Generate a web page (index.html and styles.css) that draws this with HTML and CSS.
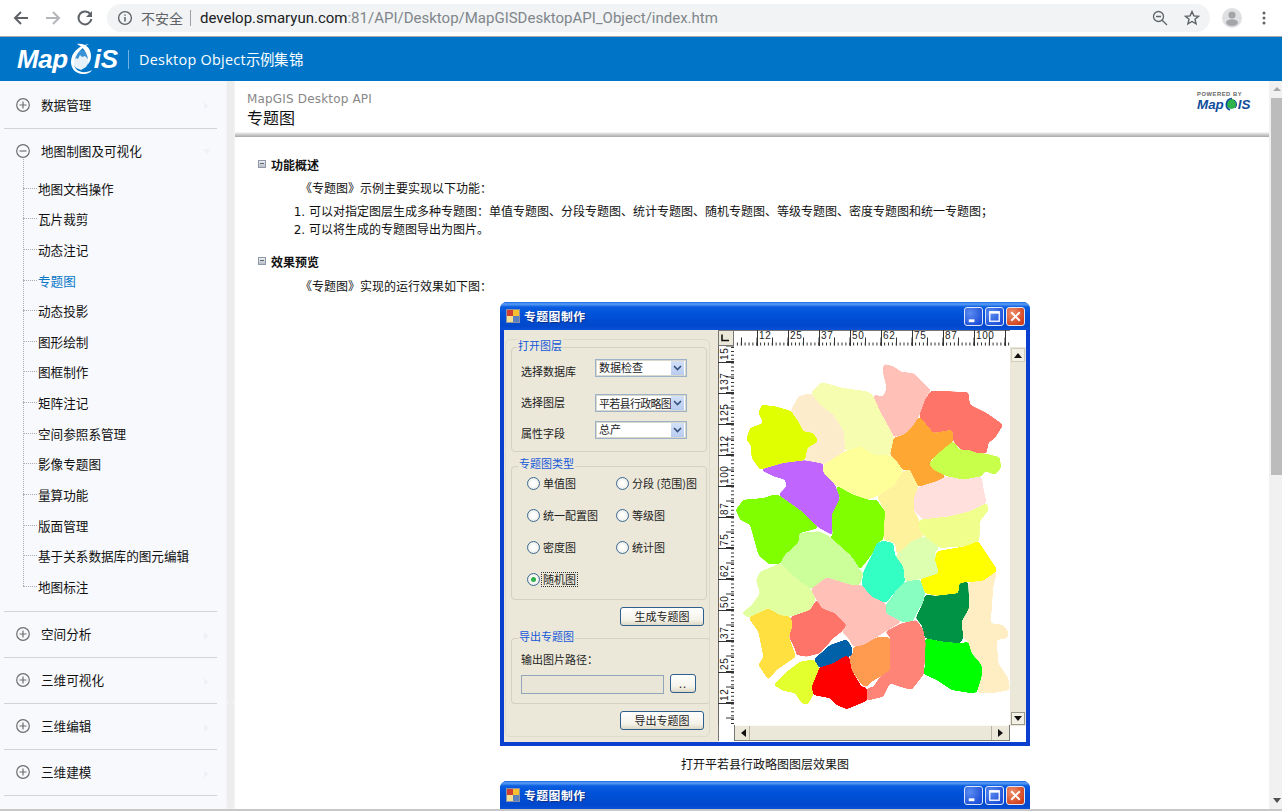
FILE: index.html
```html
<!DOCTYPE html>
<html lang="zh-CN">
<head>
<meta charset="utf-8">
<title>专题图</title>
<link rel="stylesheet" href="styles.css">
</head>
<body>
<div class="app">
  <div class="browser">
    <div class="nav-btns">
      <svg class="nav-ic" viewBox="0 0 18 18"><path d="M16 9H3.5M9 3 3 9l6 6" fill="none" stroke="#5f6368" stroke-width="2"/></svg>
      <svg class="nav-ic" viewBox="0 0 18 18"><path d="M2 9h12.5M9 3l6 6-6 6" fill="none" stroke="#b4b6b9" stroke-width="2"/></svg>
      <svg class="nav-ic" viewBox="0 0 18 18"><path d="M14.6 5.6A6.5 6.5 0 1 0 15.4 10" fill="none" stroke="#5f6368" stroke-width="2"/><path d="M16 2v6h-6z" fill="#5f6368"/></svg>
    </div>
    <div class="omnibox">
      <svg class="info" viewBox="0 0 16 16"><circle cx="8" cy="8" r="6.4" fill="none" stroke="#5f6368" stroke-width="1.4"/><path d="M8 7v4.5M8 4.4v1.4" stroke="#5f6368" stroke-width="1.5"/></svg>
      <span class="insecure">不安全</span>
      <span class="url-sep"></span>
      <span class="url"><span class="url-host">develop.smaryun.com</span>:81/API/Desktop/MapGISDesktopAPI_Object/index.htm</span>
      <svg class="omni-ic zoom-ic" viewBox="0 0 16 16"><circle cx="6.5" cy="6.5" r="5" fill="none" stroke="#5f6368" stroke-width="1.3"/><path d="M4 6.5h5M10.2 10.2 15 15" stroke="#5f6368" stroke-width="1.3"/></svg>
      <svg class="omni-ic" viewBox="0 0 16 16"><path d="m8 1.6 1.9 4.3 4.6.4-3.5 3 1.1 4.6L8 11.5l-4.1 2.4L5 9.3l-3.5-3 4.6-.4z" fill="none" stroke="#5f6368" stroke-width="1.4"/></svg>
    </div>
    <svg class="avatar" viewBox="0 0 20 20"><circle cx="10" cy="10" r="10" fill="#dfe0e2"/><circle cx="10" cy="7" r="3.6" fill="#a4a6a9"/><ellipse cx="10" cy="14.6" rx="6" ry="3.4" fill="#a4a6a9"/></svg>
    <svg class="dots" viewBox="0 0 4 14"><circle cx="2" cy="2" r="1.5" fill="#5f6368"/><circle cx="2" cy="7" r="1.5" fill="#5f6368"/><circle cx="2" cy="12" r="1.5" fill="#5f6368"/></svg>
  </div>

  <header class="topbar">
    <div class="logo">
      <span>Map</span>
      <svg class="logo-globe" viewBox="0 0 24 34"><circle cx="12" cy="17" r="9" fill="#3a92d6"/><path d="M4 19l3-3 2 1 2-4 2 2 3-1 3 3 1 3-3 5-5 3-5-2-3-4z" fill="#e6f1fa"/><path d="M20 2C11 3 2 10 2 20c0 7 5 12 12 12 5 0 8-2 9-4-5 3-12 3-16-1C3 22 5 10 20 2z" fill="#fff"/><path d="M8 2c8-1 14 4 14 12 0 3-1 6-3 8 1-8-3-16-11-20z" fill="#fff"/></svg>
      <span>iS</span>
    </div>
    <span class="top-sep"></span>
    <span class="top-title">Desktop Object示例集锦</span>
  </header>

  <div class="main">
    <nav class="sidebar">
      <div class="nav-group first"><svg class="toggle" viewBox="0 0 14 14"><circle cx="7" cy="7" r="6.3"/><path d="M3.500 7h7M7 3.500v7"/></svg><span class="nav-title">数据管理</span><i class="tri"></i></div>
      <div class="nav-group open"><svg class="toggle" viewBox="0 0 14 14"><circle cx="7" cy="7" r="6.3"/><path d="M3.500 7h7"/></svg><span class="nav-title">地图制图及可视化</span><i class="tri down"></i></div>
      <ul class="tree">
        <li>地图文档操作</li>
        <li>瓦片裁剪</li>
        <li>动态注记</li>
        <li class="active">专题图</li>
        <li>动态投影</li>
        <li>图形绘制</li>
        <li>图框制作</li>
        <li>矩阵注记</li>
        <li>空间参照系管理</li>
        <li>影像专题图</li>
        <li>量算功能</li>
        <li>版面管理</li>
        <li>基于关系数据库的图元编辑</li>
        <li>地图标注</li>
      </ul>
      <div class="nav-group"><svg class="toggle" viewBox="0 0 14 14"><circle cx="7" cy="7" r="6.3"/><path d="M3.500 7h7M7 3.500v7"/></svg><span class="nav-title">空间分析</span><i class="tri"></i></div>
      <div class="nav-group"><svg class="toggle" viewBox="0 0 14 14"><circle cx="7" cy="7" r="6.3"/><path d="M3.500 7h7M7 3.500v7"/></svg><span class="nav-title">三维可视化</span><i class="tri"></i></div>
      <div class="nav-group"><svg class="toggle" viewBox="0 0 14 14"><circle cx="7" cy="7" r="6.3"/><path d="M3.500 7h7M7 3.500v7"/></svg><span class="nav-title">三维编辑</span><i class="tri"></i></div>
      <div class="nav-group"><svg class="toggle" viewBox="0 0 14 14"><circle cx="7" cy="7" r="6.3"/><path d="M3.500 7h7M7 3.500v7"/></svg><span class="nav-title">三维建模</span><i class="tri"></i></div>
    </nav>
    <div class="side-scroll"><div class="side-thumb one"></div><div class="side-thumb two"></div></div>

    <main class="content">
      <div class="page-head">
        <div class="head-text">
          <div class="api-name">MapGIS Desktop API</div>
          <h1 class="page-title">专题图</h1>
        </div>
        <div class="powered">
          <div class="powered-by">POWERED BY</div>
          <div class="powered-logo"><span>Map</span><svg class="powered-globe" viewBox="0 0 12 14"><circle cx="6.500" cy="7" r="5" fill="#2db34a"/><path d="M7 1.500A6 6 0 0 0 5 13" fill="none" stroke="#0f4d9c" stroke-width="1.600"/><path d="M9 3a5 5 0 0 1 1 8" fill="none" stroke="#0f4d9c" stroke-width="1"/></svg><span>IS</span></div>
        </div>
      </div>
      <div class="body-wrap">
        <div class="sec-head"><span class="sec-box"></span>功能概述</div>
        <p class="para">《专题图》示例主要实现以下功能：</p>
        <ol class="list">
          <li>可以对指定图层生成多种专题图：单值专题图、分段专题图、统计专题图、随机专题图、等级专题图、密度专题图和统一专题图；</li>
          <li>可以将生成的专题图导出为图片。</li>
        </ol>
        <div class="sec-head second"><span class="sec-box"></span>效果预览</div>
        <p class="para">《专题图》实现的运行效果如下图：</p>

        <figure class="figure">
          <div class="xp-window">
            <div class="xp-title">
              <svg class="xp-icon" viewBox="0 0 14 14"><rect width="14" height="14" fill="#8a93a8"/><rect x="1" y="1" width="6" height="6" fill="#d04030"/><rect x="7" y="1" width="6" height="6" fill="#f6c030"/><rect x="1" y="7" width="6" height="6" fill="#f4e090"/><rect x="7" y="7" width="6" height="6" fill="#5a80c0"/></svg>
              <span class="xp-caption">专题图制作</span>
              <span class="xp-btn"><svg viewBox="0 0 18 18"><rect x="4" y="12" width="6" height="3" fill="#fff"/></svg></span>
              <span class="xp-btn"><svg viewBox="0 0 18 18"><rect x="4" y="4" width="10" height="10" fill="none" stroke="#fff" stroke-width="1.400"/><path d="M4 5h10" stroke="#fff" stroke-width="2"/></svg></span>
              <span class="xp-btn close"><svg viewBox="0 0 18 18"><path d="m4.500 4.500 9 9m0-9-9 9" stroke="#fff" stroke-width="2"/></svg></span>
            </div>
            <div class="xp-client">
              <div class="panel">
                <div class="frame">
                  <div class="group g-open">
                    <span class="legend">打开图层</span>
                    <div class="form-row"><span class="label low">选择数据库</span><div class="combo"><span class="combo-text">数据检查</span><span class="combo-btn"><svg viewBox="0 0 9 6"><path d="m1 1 3.500 3.500L8 1" fill="none" stroke="#34507e" stroke-width="1.600"/></svg></span></div></div>
                    <div class="form-row r2"><span class="label up">选择图层</span><div class="combo"><span class="combo-text tight">平若县行政略图</span><span class="combo-btn"><svg viewBox="0 0 9 6"><path d="m1 1 3.500 3.500L8 1" fill="none" stroke="#34507e" stroke-width="1.600"/></svg></span></div></div>
                    <div class="form-row r3"><span class="label low">属性字段</span><div class="combo"><span class="combo-text">总产</span><span class="combo-btn"><svg viewBox="0 0 9 6"><path d="m1 1 3.500 3.500L8 1" fill="none" stroke="#34507e" stroke-width="1.600"/></svg></span></div></div>
                  </div>
                  <div class="group g-type">
                    <span class="legend">专题图类型</span>
                    <div class="radios">
                      <div class="radio"><i class="dot"></i>单值图</div>
                      <div class="radio"><i class="dot"></i>分段 (范围)图</div>
                      <div class="radio"><i class="dot"></i>统一配置图</div>
                      <div class="radio"><i class="dot"></i>等级图</div>
                      <div class="radio"><i class="dot"></i>密度图</div>
                      <div class="radio"><i class="dot"></i>统计图</div>
                      <div class="radio"><i class="dot on"></i><span class="focus">随机图</span></div>
                    </div>
                  </div>
                  <div class="xp-button b-make">生成专题图</div>
                  <div class="group g-export">
                    <span class="legend">导出专题图</span>
                    <div class="label path-label">输出图片路径：</div>
                    <div class="path-row"><div class="path-input"></div><div class="xp-button b-dots">..</div></div>
                  </div>
                  <div class="xp-button b-export">导出专题图</div>
                </div>
              </div>
              <div class="mapview">
                <svg class="map-svg" viewBox="718 330 308 412">
                  <defs>
                    <filter id="smooth" x="-15%" y="-15%" width="130%" height="130%" color-interpolation-filters="sRGB">
                      <feMorphology operator="dilate" radius="1.500"/>
                      <feGaussianBlur stdDeviation="5"/>
                      <feComponentTransfer><feFuncA type="linear" slope="14" intercept="-6.500"/></feComponentTransfer>
                    </filter>
                  </defs>
                  <rect x="718" y="330" width="308" height="412" fill="#fff"/>
                  <rect x="718" y="330" width="292" height="1" fill="#777"/>
                  <!-- horizontal ruler -->
                  <g stroke="#333">
                    <line x1="733" y1="344" x2="1010" y2="344" stroke-width="3" stroke-dasharray="1 2.875"/>
                    <line x1="741" y1="341.500" x2="1010" y2="341.500" stroke-width="8" stroke-dasharray="1 14.500"/>
                    <line x1="757" y1="338" x2="1010" y2="338" stroke-width="16" stroke-dasharray="1 30"/>
                  </g>
                  <g class="ruler-text">
                    <text x="759" y="339">12</text><text x="790" y="339">25</text><text x="821" y="339">37</text><text x="852" y="339">50</text><text x="883" y="339">62</text><text x="914" y="339">75</text><text x="945" y="339">87</text><text x="976" y="339">100</text>
                  </g>
                  <!-- vertical ruler -->
                  <rect x="718" y="346" width="16" height="380" fill="#fff"/>
                  <rect x="718" y="346" width="1" height="380" fill="#666"/>
                  <g stroke="#333">
                    <line x1="732.500" y1="346" x2="732.500" y2="726" stroke-width="3" stroke-dasharray="1 2.875" stroke-dashoffset="-1"/>
                    <line x1="730" y1="346" x2="730" y2="726" stroke-width="8" stroke-dasharray="1 14.500" stroke-dashoffset="0.500"/>
                    <line x1="726" y1="362" x2="726" y2="726" stroke-width="16" stroke-dasharray="1 30"/>
                  </g>
                  <g class="ruler-text">
                    <text transform="translate(728 360) rotate(-90)">15</text>
                    <text transform="translate(728 391) rotate(-90)">137</text>
                    <text transform="translate(728 422) rotate(-90)">125</text>
                    <text transform="translate(728 453) rotate(-90)">112</text>
                    <text transform="translate(728 484) rotate(-90)">100</text>
                    <text transform="translate(728 515) rotate(-90)">87</text>
                    <text transform="translate(728 546) rotate(-90)">75</text>
                    <text transform="translate(728 577) rotate(-90)">62</text>
                    <text transform="translate(728 608) rotate(-90)">50</text>
                    <text transform="translate(728 639) rotate(-90)">37</text>
                    <text transform="translate(728 670) rotate(-90)">25</text>
                    <text transform="translate(728 701) rotate(-90)">12</text>
                  </g>
                  <!-- corner -->
                  <rect x="718" y="330" width="16" height="16" fill="#ebe8d9"/>
                  <rect x="718.500" y="330.500" width="15" height="15" fill="none" stroke="#777"/>
                  <path d="M722 334.500v6h7" fill="none" stroke="#111" stroke-width="1.600"/>

                  <!-- map, drawn in 3x coordinates -->
                  <g transform="translate(720 298) scale(.33333)">
                    <polygon filter="url(#smooth)" fill="#ffc0b8" points="490,197 520,205 545,222 580,225 605,250 632,275 615,305 597,355 578,385 555,408 522,418 505,385 480,340 458,290 490,295 500,270 490,230"/>
                    <polygon filter="url(#smooth)" fill="#ff7468" points="632,278 745,282 750,320 800,345 850,380 825,420 805,435 800,467 770,465 745,455 722,455 700,430 697,395 640,405 615,375 597,355 615,305"/>
                    <polygon filter="url(#smooth)" fill="#ffa733" points="597,355 615,375 640,405 697,395 700,430 670,455 630,490 640,515 680,535 650,550 595,567 570,515 550,518 530,490 510,470 520,420 555,408 578,385"/>
                    <polygon filter="url(#smooth)" fill="#c8ff4a" points="700,430 720,455 745,455 770,465 800,467 840,478 843,510 825,530 795,520 785,535 730,545 680,535 640,515 627,497 650,470 680,445"/>
                    <polygon filter="url(#smooth)" fill="#f6fdb0" points="305,252 370,270 440,280 458,290 480,340 505,385 522,418 510,470 480,480 460,470 420,445 375,460 372,400 340,350 300,320 272,285"/>
                    <polygon filter="url(#smooth)" fill="#fdeccc" points="272,285 300,320 340,350 372,400 375,460 310,500 255,487 255,475 262,450 295,430 280,405 250,400 235,370 212,338 235,295"/>
                    <polygon filter="url(#smooth)" fill="#e0ff00" points="125,320 165,325 212,338 235,370 250,400 280,405 295,430 262,450 255,487 190,495 120,515 95,480 92,440 78,425 90,390 130,375 115,345"/>
                    <polygon filter="url(#smooth)" fill="#c066ff" points="120,515 190,495 255,487 310,497 310,525 345,560 360,600 335,650 338,712 297,690 245,640 175,590 200,565 195,545 160,535"/>
                    <polygon filter="url(#smooth)" fill="#ffff99" points="310,500 375,460 420,445 460,470 510,470 530,490 550,518 520,565 470,595 445,605 400,590 345,560 310,525"/>
                    <polygon filter="url(#smooth)" fill="#fff29c" points="550,518 570,515 595,567 582,600 582,640 598,665 595,690 612,715 575,730 530,770 525,735 490,725 490,660 495,640 470,595 520,565"/>
                    <polygon filter="url(#smooth)" fill="#ffe0dc" points="595,567 650,550 680,535 730,545 785,535 790,570 800,615 750,640 690,655 610,665 582,640 582,600"/>
                    <polygon filter="url(#smooth)" fill="#f0ff8c" points="800,615 807,635 780,670 778,730 735,745 660,750 612,715 595,690 598,665 690,655 750,640"/>
                    <polygon filter="url(#smooth)" fill="#80ff00" points="130,600 160,590 175,590 245,640 297,690 240,705 235,735 195,770 180,798 145,798 115,770 90,680 60,665 47,635 70,605"/>
                    <polygon filter="url(#smooth)" fill="#80ff00" points="345,560 400,590 445,605 470,605 495,640 490,725 470,735 458,766 440,790 420,815 405,790 390,770 328,720 338,712 335,650 360,600"/>
                    <polygon filter="url(#smooth)" fill="#ccff99" points="238,705 297,700 328,715 390,770 405,790 420,815 430,826 420,861 395,861 345,846 320,838 275,874 240,851 180,796 195,770 235,735"/>
                    <polygon filter="url(#smooth)" fill="#33ffc4" points="470,735 490,728 520,735 525,771 550,806 555,851 530,876 497,916 455,896 425,861 430,821 458,766"/>
                    <polygon filter="url(#smooth)" fill="#ddffb0" points="530,770 575,730 612,715 660,750 645,761 657,826 600,844 555,851 550,806 525,771"/>
                    <polygon filter="url(#smooth)" fill="#ffff00" points="650,760 735,745 775,730 805,775 825,805 832,818 790,848 745,853 718,856 715,886 650,893 615,886 600,844 657,826 645,786"/>
                    <polygon filter="url(#smooth)" fill="#88ffc0" points="555,851 600,844 615,886 610,911 590,946 575,976 545,971 497,946 497,921 530,876"/>
                    <polygon filter="url(#smooth)" fill="#e2ffa0" points="108,846 120,821 180,796 240,851 275,874 288,904 270,936 210,956 180,951 145,931 85,959 65,946 95,921 120,886"/>
                    <polygon filter="url(#smooth)" fill="#ffc0b8" points="320,838 345,846 395,861 425,861 455,896 497,916 497,946 545,971 495,1001 470,1018 430,1041 400,1046 385,1021 365,1001 380,981 345,946 305,931 288,904 272,874"/>
                    <polygon filter="url(#smooth)" fill="#009245" points="718,856 745,851 747,931 725,971 730,1021 720,1036 670,1031 615,1021 605,981 587,961 610,911 615,891 650,893 715,886"/>
                    <polygon filter="url(#smooth)" fill="#ffeec4" points="790,848 832,818 820,866 812,976 850,981 865,1001 862,1021 830,1026 835,1096 865,1141 870,1176 825,1184 770,1184 785,1136 785,1101 755,1066 745,1031 730,1021 725,971 747,931 745,853"/>
                    <polygon filter="url(#smooth)" fill="#00ff00" points="615,1021 670,1031 720,1036 745,1031 755,1066 785,1101 785,1136 770,1184 745,1184 695,1176 650,1146 610,1128 615,1101"/>
                    <polygon filter="url(#smooth)" fill="#ff8478" points="510,1018 495,1001 545,976 590,966 610,996 617,1036 612,1128 575,1176 540,1166 510,1156 490,1196 440,1208 440,1171 460,1166 480,1136 505,1116 510,1056"/>
                    <polygon filter="url(#smooth)" fill="#ff9b50" points="400,1046 430,1041 470,1018 510,1018 510,1116 480,1136 455,1151 440,1168 425,1161 395,1116 388,1076 398,1068"/>
                    <polygon filter="url(#smooth)" fill="#0060a8" points="380,1024 395,1046 398,1068 388,1076 340,1096 298,1111 282,1084 330,1041"/>
                    <polygon filter="url(#smooth)" fill="#ff0000" points="375,1074 388,1076 395,1116 425,1166 440,1168 442,1208 380,1234 350,1221 330,1201 280,1191 275,1166 292,1111 340,1096"/>
                    <polygon filter="url(#smooth)" fill="#ff7468" points="290,904 305,931 345,946 380,981 365,1001 340,1021 300,1066 260,1076 230,1071 222,1046 207,1016 218,981 212,956 270,936"/>
                    <polygon filter="url(#smooth)" fill="#ffe040" points="85,959 145,931 180,951 212,956 218,981 207,1016 228,1076 170,1116 145,1146 115,1101 130,1076 115,1001"/>
                    <polygon filter="url(#smooth)" fill="#e4ff2e" points="240,1091 282,1084 298,1111 275,1166 280,1191 262,1221 245,1216 225,1186 190,1178 160,1161 200,1121"/>
                  </g>

                  <!-- vertical scrollbar -->
                  <rect x="1010" y="347" width="16" height="379" fill="#ebe8d9"/>
                  <rect x="1011.500" y="348.500" width="13" height="13" fill="#f3f1e6" stroke="#d0cdbc"/>
                  <path d="m1014 358 4-5 4 5z" fill="#111"/>
                  <rect x="1011.500" y="712.500" width="13" height="12" fill="#f3f1e6" stroke="#9c9a8c"/>
                  <path d="m1014 716 4 5 4-5z" fill="#111"/>
                  <!-- horizontal scrollbar -->
                  <rect x="734" y="725" width="276" height="16" fill="#ebe8d9"/>
                  <rect x="734" y="725" width="276" height="1" fill="#fbfaf3"/>
                  <rect x="734" y="740" width="276" height="1" fill="#85837a"/>
                  <rect x="718" y="725" width="1" height="16" fill="#777"/>
                  <rect x="734" y="725" width="1" height="16" fill="#777"/>
                  <rect x="749" y="726" width="1" height="14" fill="#b8b5a4"/>
                  <rect x="991" y="726" width="1" height="14" fill="#b8b5a4"/>
                  <rect x="1009" y="725" width="1" height="16" fill="#777"/>
                  <path d="m746 729-5 4 5 4z" fill="#111"/>
                  <path d="m998 729 5 4-5 4z" fill="#111"/>
                </svg>
              </div>
            </div>
          </div>
          <figcaption class="caption">打开平若县行政略图图层效果图</figcaption>
          <div class="xp-window clipped">
            <div class="xp-title">
              <svg class="xp-icon" viewBox="0 0 14 14"><rect width="14" height="14" fill="#8a93a8"/><rect x="1" y="1" width="6" height="6" fill="#d04030"/><rect x="7" y="1" width="6" height="6" fill="#f6c030"/><rect x="1" y="7" width="6" height="6" fill="#f4e090"/><rect x="7" y="7" width="6" height="6" fill="#5a80c0"/></svg>
              <span class="xp-caption">专题图制作</span>
              <span class="xp-btn"><svg viewBox="0 0 18 18"><rect x="4" y="12" width="6" height="3" fill="#fff"/></svg></span>
              <span class="xp-btn"><svg viewBox="0 0 18 18"><rect x="4" y="4" width="10" height="10" fill="none" stroke="#fff" stroke-width="1.400"/><path d="M4 5h10" stroke="#fff" stroke-width="2"/></svg></span>
              <span class="xp-btn close"><svg viewBox="0 0 18 18"><path d="m4.500 4.500 9 9m0-9-9 9" stroke="#fff" stroke-width="2"/></svg></span>
            </div>
          </div>
        </figure>
      </div>
    </main>
    <div class="page-scroll">
      <i class="arrow-up"></i>
      <div class="page-thumb"></div>
      <i class="arrow-down"></i>
    </div>
  </div>
  <div class="bottom-line"></div>
</div>
</body>
</html>
```
FILE: styles.css
```css
* { box-sizing: border-box; }
html, body { margin: 0; padding: 0; height: 100%; overflow: hidden; background: #fff; }
body { font-family: "Noto Sans CJK SC", "Noto Sans", sans-serif; color: #111; }
p, h1, ul, ol, figure { margin: 0; padding: 0; }

.app { display: flex; flex-direction: column; width: 1282px; height: 811px; overflow: hidden; }

/* browser chrome */
.browser { flex: none; height: 37px; display: flex; align-items: center; background: #fff; border-bottom: 1px solid #a9a9a9; padding-bottom: 1px; }
.nav-btns { display: flex; gap: 14px; margin-left: 12px; }
.nav-ic { width: 18px; height: 18px; }
.omnibox { width: 1103px; height: 28px; margin-left: 13px; border-radius: 14px; background: #f1f3f4; display: flex; align-items: center; padding-left: 10px; padding-right: 8px; }
.info { width: 16px; height: 16px; flex: none; }
.insecure { font-size: 14px; color: #5f6368; margin-left: 8px; width: 42px; }
.url-sep { width: 1px; height: 16px; background: #9aa0a6; margin: 0 9px 0 7px; }
.url { font-family: Roboto, "Liberation Sans", sans-serif; font-size: 15px; color: #80868b; flex: 1; white-space: nowrap; }
.url-host { color: #202124; }
.omni-ic { width: 16px; height: 16px; flex: none; margin-right: 2px; }
.zoom-ic { margin-right: 16px; }
.avatar { width: 20px; height: 20px; margin-left: 12px; }
.dots { width: 4px; height: 14px; margin-left: 20px; }

/* blue header */
.topbar { flex: none; height: 44px; background: #0075c8; display: flex; align-items: center; padding-left: 17px; color: #fff; }
.logo { display: flex; align-items: center; font-family: "Liberation Sans", Arial, sans-serif; font-weight: bold; font-style: italic; font-size: 26px; letter-spacing: -.4px; width: 103px; }
.logo-globe { width: 24px; height: 34px; margin: 0 1px; flex: none; }
.top-sep { width: 1px; height: 19px; background: #6fb1e0; margin-left: 8px; }
.top-title { font-family: "Open Sans", sans-serif; font-size: 14.4px; margin: -2px 0 0 10px; letter-spacing: .28px; }

/* main */
.main { flex: none; height: 728px; display: flex; }
.bottom-line { flex: none; height: 2px; background: #c8c8c8; }

.sidebar { flex: none; width: 226px; background: #f8f9fd; padding: 1px 9px 0 4px; overflow: hidden; }
.nav-group { height: 46px; display: flex; align-items: center; border-bottom: 1px solid #d2d3d8; font-size: 12.6px; position: relative; color: #111; }
.nav-group.first { height: 47px; }
.nav-group.open { border-bottom: 0; height: 44px; }
.toggle { width: 14px; height: 14px; margin-left: 12px; flex: none; fill: none; stroke: #6e6e6e; stroke-width: 1.200; }
.nav-title { margin-left: 11px; margin-top: -2px; }
.tri { position: absolute; right: 8px; top: 20px; border-left: 5px solid #f0f1f6; border-top: 4px solid transparent; border-bottom: 4px solid transparent; }
.tri.down { border-left: 4px solid transparent; border-right: 4px solid transparent; border-top: 5px solid #f0f1f6; border-bottom: 0; right: 6px; }

.tree { list-style: none; margin: -14px -9px 0 19px; padding: 14px 0 10px; background-image: repeating-linear-gradient(to bottom, #a9abb5 0 1px, transparent 1px 2px); background-size: 1px calc(100% - 25px); background-repeat: no-repeat; position: relative; }
.tree::after { content: ""; position: absolute; left: -19px; right: 9px; bottom: 0; height: 1px; background: #d2d3d8; }
.tree li { height: 30.620px; display: flex; align-items: center; font-size: 12.6px; color: #111; white-space: nowrap; }
.tree li::before { content: ""; width: 14px; margin-right: 1px; border-top: 1px dotted #a9abb5; flex: none; }
.tree li.active { color: #0a78c8; }

.side-scroll { flex: none; width: 9px; background: #f3f3f3; padding: 0 1px; }
.side-thumb { background: #ededed; border-radius: 0 0 5px 5px; }
.side-thumb.one { height: 621px; }
.side-thumb.two { height: 106px; border-radius: 5px; }

.content { flex: 1; min-width: 0; overflow: hidden; background: #fff; }
.page-head { height: 56px; display: flex; justify-content: space-between; padding: 10px 17px 0 12px; background: linear-gradient(to bottom, #fff 0, #fff 51px, #e6e6e6 52px, #a8a8a8 56px); }
.api-name { font-family: "DejaVu Sans", sans-serif; font-size: 12px; letter-spacing: .17px; line-height: 17px; color: #888; }
.page-title { font-size: 16px; font-weight: normal; line-height: 22px; margin-top: -2px; color: #111; }
.powered { width: 55px; }
.powered-by { font-family: "Liberation Sans", sans-serif; font-size: 5.800px; font-weight: bold; letter-spacing: .55px; line-height: 7px; color: #666; white-space: nowrap; }
.powered-logo { display: flex; align-items: center; font-family: "Liberation Sans", sans-serif; font-weight: bold; font-style: italic; font-size: 13.400px; line-height: 13px; color: #0f4d9c; margin-top: -1px; }
.powered-globe { width: 12px; height: 14px; margin: 0 1px; }

.body-wrap { padding: 17px 0 0; font-size: 12px; color: #111; }
.sec-head { display: flex; align-items: center; height: 20px; margin-bottom: 1px; font-weight: bold; padding-left: 23px; }
.sec-head.second { margin-top: 13px; margin-bottom: 2px; }
.sec-box { width: 8px; height: 8px; margin-right: 5px; background: linear-gradient(#eceef2, #b8bec8); border: 1px solid #8f99a8; position: relative; }
.sec-box::after { content: ""; position: absolute; left: 1px; right: 1px; top: 2px; height: 1px; background: #5f6670; }
.para { height: 26px; line-height: 26px; padding-left: 65px; white-space: nowrap; }
.list { padding-left: 74px; margin-top: 1px; }
.list li { height: 18px; line-height: 18px; white-space: nowrap; }
.list li::marker { font-family: "DejaVu Sans", sans-serif; }

.figure { width: 530px; margin: 3px 0 0 265px; }
.caption { height: 35px; line-height: 36px; text-align: center; font-size: 12px; }

/* XP window */
.xp-window { width: 530px; height: 444px; border-radius: 7px 7px 0 0; background: #0a3fd0; padding: 0 4px 4px; display: flex; flex-direction: column; }
.xp-window.clipped { height: 60px; }
.xp-title { flex: none; height: 28px; margin: 0 -4px; padding: 0 5px 0 6px; border-radius: 7px 7px 0 0; display: flex; align-items: center; background: linear-gradient(to bottom, #1466e6 0, #5aa0f4 2px, #0a5ce0 5px, #0052d8 12px, #0048cc 24px, #0a50d8 28px); }
.xp-icon { width: 14px; height: 14px; flex: none; }
.xp-caption { flex: 1; margin: -2px 0 0 4px; font-size: 11.800px; font-weight: bold; color: #fff; text-shadow: 1px 1px 1px #0a2a80; letter-spacing: .5px; }
.xp-btn { width: 19px; height: 19px; margin-left: 2px; border: 1px solid #dfe8fb; border-radius: 3px; background: radial-gradient(circle at 30% 30%, #5a8cf0, #1e4fd8 80%); display: block; }
.xp-btn svg { display: block; width: 17px; height: 17px; }
.xp-btn.close { background: radial-gradient(circle at 30% 30%, #f0906c, #d0401c 80%); }
.xp-client { flex: 1; display: flex; min-height: 0; background: #fff; }

.panel { flex: none; width: 214px; background: #ebe8d9; padding: 9px 0 0 1px; font-size: 11px; color: #222; }
.frame { width: 205px; height: 398px; border: 1px solid #dedbca; border-radius: 5px; padding: 7px 0 0 5px; }
.group { position: relative; border: 1px solid #d4d1c0; border-radius: 4px; width: 196px; }
.legend { position: absolute; left: 5px; top: -10px; background: #ebe8d9; padding: 0 1px; color: #1458d8; line-height: 14px; font-size: 11px; }
.g-open { height: 105px; padding: 11px 0 0 9px; }
.form-row { display: flex; height: 18px; }
.form-row.r2 { margin-top: 17px; }
.form-row.r3 { margin-top: 9px; }
.label { width: 74px; line-height: 18px; white-space: nowrap; }
.label.low { padding-top: 3px; }
.label.up { margin-top: -1px; }
.combo { width: 92px; height: 18px; border: 1px solid #9db2c8; box-shadow: inset 0 0 0 1px #d8d8cc; background: #fff; display: flex; align-items: center; padding: 0 2px; }
.combo-text { flex: 1; overflow: hidden; white-space: nowrap; line-height: 14px; margin-top: -3px; padding-left: 1px; }
.combo-text.tight { letter-spacing: -.7px; margin-top: -1px; }
.combo-btn { width: 13px; height: 14px; background: linear-gradient(#d3e0f6, #b8ccf0); display: flex; align-items: center; justify-content: center; flex: none; }
.combo-btn svg { width: 9px; height: 6px; }

.g-type { height: 134px; margin-top: 14px; }
.g-type .legend { left: 6px; top: -11px; }
.radios { display: grid; grid-template-columns: 89px 100px; grid-auto-rows: 32px; padding: 0 0 0 15px; }
.radio { display: flex; align-items: center; white-space: nowrap; }
.dot { width: 13px; height: 13px; border-radius: 50%; border: 1px solid #3d6a96; background: radial-gradient(circle, #fff 30%, #dcdcd2 100%); margin-right: 3px; flex: none; position: relative; }
.dot.on::after { content: ""; position: absolute; left: 3px; top: 3px; width: 5px; height: 5px; border-radius: 50%; background: #2fb24a; }
.focus { outline: 1px dotted #333; line-height: 13px; padding: 0 1px; margin-left: -1px; }

.xp-button { width: 84px; height: 19px; border: 1px solid #2f5f8f; border-radius: 3px; background: linear-gradient(#fff, #f4f2e8 70%, #dcd8c6); text-align: center; font-size: 11px; line-height: 16px; color: #222; }
.b-make { margin: 7px 0 0 109px; }
.g-export { height: 66px; width: 199px; margin-top: 12px; border-right: 0; padding: 10px 0 0 9px; }
.g-export .legend { left: 6px; }
.path-label { width: auto; line-height: 20px; }
.path-row { display: flex; gap: 6px; margin-top: 6px; align-items: flex-start; }
.path-input { width: 143px; height: 19px; border: 1px solid #93a5b8; background: #e9e6d7; }
.b-dots { width: 26px; margin-top: -1px; line-height: 17px; letter-spacing: 1px; }
.b-export { margin: 7px 0 0 109px; }

.mapview { flex: 1; min-width: 0; }
.map-svg { display: block; width: 308px; height: 412px; }
.ruler-text text { font-family: "Liberation Sans", sans-serif; font-size: 10px; letter-spacing: .6px; fill: #222; stroke: none; }

/* page scrollbar */
.page-scroll { flex: none; width: 13px; background: #f1f1f1; position: relative; padding: 17px 0 0 2px; }
.page-thumb { height: 377px; background: #bcbcbc; }
.arrow-up { position: absolute; left: 4px; top: 6px; border-left: 4px solid transparent; border-right: 4px solid transparent; border-bottom: 4px solid #a8a8a8; }
.arrow-down { position: absolute; left: 4px; bottom: 6px; border-left: 4px solid transparent; border-right: 4px solid transparent; border-top: 5px solid #505050; }
```
